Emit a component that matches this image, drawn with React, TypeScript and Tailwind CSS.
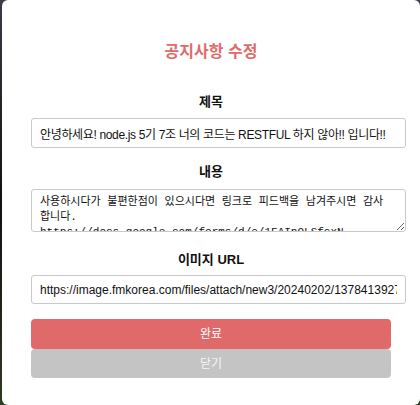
import React, { useState } from 'react'

const NoticeEditModal = () => {
  const [title, setTitle] = useState('안녕하세요! node.js 5기 7조 너의 코드는 RESTFUL 하지 않아!! 입니다!!')
  const [content, setContent] = useState(
    '사용하시다가 불편한점이 있으시다면 링크로 피드백을 남겨주시면 감사합니다.\nhttps://docs.google.com/forms/d/e/1FAIpQLSfcxN-0mXq3Tz8rB2kLwV7nHgYpD4sUe/viewform'
  )
  const [imageUrl, setImageUrl] = useState('https://image.fmkorea.com/files/attach/new3/20240202/1378413927/6654838592/6659093342/8f1d2c.png')

  return (
    <div className="h-[405px] w-[420px] overflow-hidden bg-gradient-to-b from-[#3d3b48] via-[#111111] to-[#2f3b22] pl-[2px] font-['Liberation_Sans','Noto_Sans_CJK_KR',sans-serif]">
      <div className="flex h-[405px] flex-col rounded-[6px] bg-white pt-[40px]">
        <h2 className="text-center text-[16px] font-bold leading-[24px] text-[#e06b6b]">공지사항 수정</h2>

        <label className="mt-[28px] block text-center text-[13px] font-bold leading-[20px] text-[#111]">제목</label>
        <input
          name="title"
          value={title}
          onChange={(e) => setTitle(e.target.value)}
          className="ml-[29px] mt-[6px] h-[30px] w-[375px] rounded-[3px] border border-[#c9c9c9] px-[8px] text-[12px] tracking-[-0.35px] text-[#111] outline-none"
        />

        <label className="mt-[14px] block text-center text-[13px] font-bold leading-[20px] text-[#111]">내용</label>
        <textarea
          name="content"
          value={content}
          onChange={(e) => setContent(e.target.value)}
          className="ml-[29px] mt-[7px] h-[43px] w-[375px] overflow-hidden rounded-[3px] border border-[#c9c9c9] pb-[5px] pl-[8px] pr-[13px] pt-[5px] font-['Liberation_Mono','Noto_Sans_CJK_KR',monospace] text-[11px] leading-[15px] text-[#111] outline-none"
        />

        <label className="mt-[18px] block text-center text-[13px] font-bold leading-[20px] text-[#111]">이미지 URL</label>
        <input
          name="imageUrl"
          value={imageUrl}
          onChange={(e) => setImageUrl(e.target.value)}
          className="ml-[29px] mt-[5px] h-[29px] w-[375px] rounded-[3px] border border-[#c9c9c9] px-[8px] text-[12px] text-[#111] outline-none"
        />

        <div className="ml-[29px] mt-[15px] flex w-[360px] flex-col">
          <button type="submit" className="h-[30px] w-full rounded-[4px] bg-[#e06a6a] text-[12px] text-white">
            완료
          </button>
          <button type="button" className="h-[29px] w-full rounded-[4px] bg-[#c4c4c4] text-[12px] text-[#f4f4f4]">
            닫기
          </button>
        </div>
      </div>
    </div>
  )
}

export default function App() {
  return <NoticeEditModal />
}
